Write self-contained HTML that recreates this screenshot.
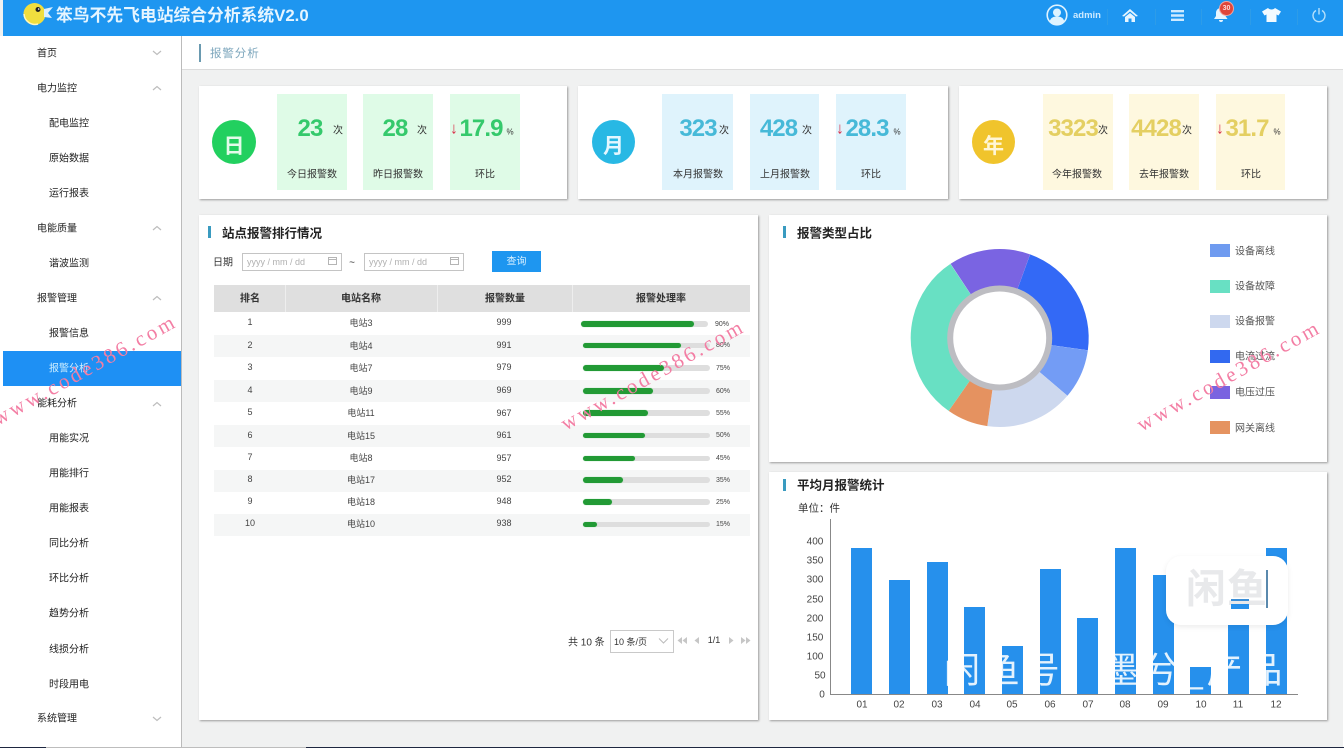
<!DOCTYPE html>
<html lang="zh">
<head>
<meta charset="utf-8">
<title>报警分析</title>
<style>
html,body{margin:0;padding:0;width:1344px;height:748px;overflow:hidden;background:#f0f1f1;}
body{position:relative;font-family:"Liberation Sans","Noto Sans CJK SC",sans-serif;color:#333;font-size:10px;}
#w{position:absolute;left:0;top:0;width:1344px;height:748px;overflow:hidden;filter:blur(.35px);}
.a{position:absolute;}
.c{position:absolute;transform:translate(-50%,calc(-50% + 1.5px));white-space:nowrap;line-height:1;}
.l{position:absolute;transform:translateY(calc(-50% + 1.5px));white-space:nowrap;line-height:1;}
.card{position:absolute;background:#fff;box-shadow:1px 1px 2px #9a9a9a;}
.nav{position:absolute;color:#222;font-size:10px;line-height:1;transform:translateY(calc(-50% + 1.5px));white-space:nowrap;}
.top{left:37px}.sub{left:49px}
.tile{position:absolute;top:94px;height:96px;}
.c.n{font-weight:bold;font-size:24px;letter-spacing:-.9px;transform:translate(-50%,-50%);}
.g{color:#35c96c}.b{color:#46b9d8}.y{color:#e4cf62}
.ar{color:#d9304a;font-size:16px;font-weight:bold}
.h{font-weight:bold;font-size:12.5px;color:#222;}
.mk{position:absolute;width:3px;height:12px;background:#3a9bc0;}
.track{position:absolute;height:5.5px;background:#dedede;border-radius:3px;width:127px;left:583px;}
.fill{position:absolute;height:5.5px;background:#229a35;border-radius:3px;left:0;top:0;box-shadow:0 0 1px #8fd79b;}
.th{font-weight:bold;font-size:10px;color:#333}
.td{font-size:9px;color:#444}
.pc{font-size:7px;color:#444}
.stripe{position:absolute;left:214px;width:536px;height:22.4px;background:#f5f6f6;}
.leg{position:absolute;left:1210px;width:20px;height:12.5px;}
.yl{font-size:10px;color:#444}
.bar{position:absolute;width:21px;background:#2690ec;}
.sep{position:absolute;top:9px;width:1px;height:16px;background:#2d9ce8;}
.wm{position:absolute;font-family:"Liberation Serif",serif;font-size:21px;letter-spacing:3px;color:#f37ea4;line-height:1;white-space:nowrap;transform:translate(-50%,-50%) rotate(-29deg);}
</style>
</head>
<body>
<div id="w">
<!-- header -->
<div class="a" style="left:3px;top:0;width:1340px;height:36px;background:#1e96f0;"></div>
<svg class="a" style="left:18px;top:0" width="40" height="30" viewBox="0 0 40 30">
<circle cx="16.500" cy="14" r="11" fill="#f0de3e"/><path d="M6 14a11 11 0 0 0 14 10" fill="none" stroke="#fff6c0" stroke-width="1.500"/>
<path d="M26 9 L35 7 L30 13 L34 18 L26 17 Z" fill="#d9efff"/>
<circle cx="20" cy="9.500" r="2.500" fill="#222"/><circle cx="20.700" cy="9" r=".8" fill="#fff"/>
</svg>
<div class="l" style="left:56px;top:15px;font-size:16.800px;font-weight:bold;color:#e6f5ff;">笨鸟不先飞电站综合分析系统V2.0</div>
<svg class="a" style="left:1046px;top:4px" width="22" height="22" viewBox="0 0 22 22">
<circle cx="11" cy="11" r="9.800" fill="#1e96f0" stroke="#dff3ff" stroke-width="1.600"/>
<circle cx="11" cy="8.500" r="4" fill="#dff3ff"/><path d="M3.500 18c1-4.500 4-5.500 7.500-5.500s6.500 1 7.500 5.500a10 10 0 0 1-15 0z" fill="#dff3ff"/>
</svg>
<div class="l" style="left:1073px;top:14px;font-size:9.500px;font-weight:bold;color:#cdeaff;">admin</div>
<div class="sep" style="left:1107px"></div><div class="sep" style="left:1155px"></div><div class="sep" style="left:1201px"></div><div class="sep" style="left:1250px"></div><div class="sep" style="left:1297px"></div>
<svg class="a" style="left:1122px;top:8px" width="16" height="15" viewBox="0 0 16 15"><path d="M8 1 L16 8 L14 8.500 L8 3.500 L2 8.500 L0 8 Z" fill="#e6f5ff"/><path d="M3 9 L8 5 L13 9 V14 H9.500 V10.500 H6.500 V14 H3 Z" fill="#e6f5ff"/></svg>
<svg class="a" style="left:1171px;top:10px" width="13" height="11" viewBox="0 0 13 11"><path d="M0 0h13v2.400H0zM0 4.300h13v2.400H0zM0 8.600h13V11H0z" fill="#cfeaff"/></svg>
<svg class="a" style="left:1213px;top:5px" width="22" height="18" viewBox="0 0 22 18"><path d="M8 3c3 0 4.500 2 4.500 5v3l2 3H1l2-3V8c0-3 2-5 5-5z" fill="#e6f5ff"/><path d="M6 15h4a2 2 0 0 1-4 0z" fill="#e6f5ff"/></svg>
<div class="a" style="left:1220px;top:2px;width:13px;height:13px;border-radius:50%;background:#e0453a;box-shadow:0 0 0 1px #f2a6a0;"></div>
<div class="c" style="left:1226.500px;top:7px;font-size:7px;font-weight:bold;color:#ffd9d5;">30</div>
<svg class="a" style="left:1262px;top:8px" width="19" height="14" viewBox="0 0 19 14"><path d="M6 0 C7.500 2 11.500 2 13 0 L19 3.500 L16.500 7.500 L14.500 6.500 V14 H4.500 V6.500 L2.500 7.500 L0 3.500 Z" fill="#f3faff"/></svg>
<svg class="a" style="left:1312px;top:7px" width="14" height="16" viewBox="0 0 14 16"><path d="M4 3.500a6 6 0 1 0 6 0" fill="none" stroke="#b5e0fb" stroke-width="1.400"/><path d="M7 1v6.500" stroke="#b5e0fb" stroke-width="1.400"/></svg>

<!-- sidebar -->
<div class="a" style="left:0;top:36px;width:181px;height:712px;background:#fff;border-right:1px solid #bbb;"></div>
<div class="a" style="left:3px;top:351px;width:178px;height:35px;background:#1e90f4;"></div>
<div class="nav top" style="top:53px">首页</div>
<div class="nav top" style="top:88px">电力监控</div>
<div class="nav sub" style="top:123px">配电监控</div>
<div class="nav sub" style="top:158px">原始数据</div>
<div class="nav sub" style="top:193px">运行报表</div>
<div class="nav top" style="top:228px">电能质量</div>
<div class="nav sub" style="top:263px">谐波监测</div>
<div class="nav top" style="top:298px">报警管理</div>
<div class="nav sub" style="top:333px">报警信息</div>
<div class="nav sub" style="top:368px;color:#cdeeff">报警分析</div>
<div class="nav top" style="top:403px">能耗分析</div>
<div class="nav sub" style="top:438px">用能实况</div>
<div class="nav sub" style="top:473px">用能排行</div>
<div class="nav sub" style="top:508px">用能报表</div>
<div class="nav sub" style="top:543px">同比分析</div>
<div class="nav sub" style="top:578px">环比分析</div>
<div class="nav sub" style="top:613px">趋势分析</div>
<div class="nav sub" style="top:649px">线损分析</div>
<div class="nav sub" style="top:684px">时段用电</div>
<div class="nav top" style="top:718px">系统管理</div>
<svg class="a" style="left:150px;top:40px" width="14" height="690" viewBox="0 0 14 690" fill="none" stroke="#bdbdbd" stroke-width="1.200">
<path d="M3 11l4 3.500 4-3.500"/><path d="M3 50l4-3.500 4 3.500"/><path d="M3 190l4-3.500 4 3.500"/><path d="M3 260l4-3.500 4 3.500"/><path d="M3 366l4-3.500 4 3.500"/><path d="M3 677l4 3.500 4-3.500"/>
</svg>

<!-- breadcrumb -->
<div class="a" style="left:182px;top:36px;width:1162px;height:33px;background:#fff;border-bottom:1px solid #dcdcdc;"></div>
<div class="a" style="left:199px;top:44px;width:2px;height:18px;background:#6a9ab0;"></div>
<div class="l" style="left:210px;top:53px;font-size:11.500px;letter-spacing:.9px;color:#7ea7bd;">报警分析</div>

<!-- stat cards -->
<div class="card" style="left:199px;top:86px;width:368px;height:113px;"></div>
<div class="card" style="left:578px;top:86px;width:370px;height:113px;"></div>
<div class="card" style="left:959px;top:86px;width:368px;height:113px;"></div>

<div class="tile" style="left:277px;width:70px;background:#dffbe7"></div>
<div class="tile" style="left:363px;width:70px;background:#dffbe7"></div>
<div class="tile" style="left:450px;width:70px;background:#dffbe7"></div>
<div class="tile" style="left:662px;width:71px;background:#dff3fc"></div>
<div class="tile" style="left:750px;width:69px;background:#dff3fc"></div>
<div class="tile" style="left:836px;width:70px;background:#dff3fc"></div>
<div class="tile" style="left:1043px;width:70px;background:#fef8df"></div>
<div class="tile" style="left:1129px;width:70px;background:#fef8df"></div>
<div class="tile" style="left:1216px;width:69px;background:#fef8df"></div>

<div class="a" style="left:212px;top:120px;width:44px;height:44px;border-radius:50%;background:#22d05f;"></div>
<div class="c" style="left:234px;top:145px;font-size:21px;font-weight:bold;color:#e4fbea;">日</div>
<div class="a" style="left:592px;top:120px;width:43px;height:44px;border-radius:50%;background:#28b8e4;"></div>
<div class="c" style="left:613.500px;top:145px;font-size:21px;font-weight:bold;color:#e4f7ff;">月</div>
<div class="a" style="left:972px;top:120px;width:43px;height:44px;border-radius:50%;background:#f0c42c;"></div>
<div class="c" style="left:993.500px;top:145px;font-size:21px;font-weight:bold;color:#fff6d6;">年</div>

<div class="c n g" style="left:310px;top:129px">23</div><div class="c" style="left:338px;top:130px">次</div>
<div class="c n g" style="left:395px;top:129px">28</div><div class="c" style="left:422px;top:130px">次</div>
<div class="c ar" style="left:454px;top:128px">↓</div><div class="c n g" style="left:481px;top:129px">17.9</div><div class="c" style="left:510px;top:131px;font-size:8px">%</div>
<div class="c" style="left:312px;top:174px">今日报警数</div><div class="c" style="left:398px;top:174px">昨日报警数</div><div class="c" style="left:485px;top:174px">环比</div>

<div class="c n b" style="left:698px;top:129px">323</div><div class="c" style="left:724px;top:130px">次</div>
<div class="c n b" style="left:778.500px;top:129px">428</div><div class="c" style="left:807px;top:130px">次</div>
<div class="c ar" style="left:840px;top:128px">↓</div><div class="c n b" style="left:867px;top:129px">28.3</div><div class="c" style="left:897px;top:131px;font-size:8px">%</div>
<div class="c" style="left:698px;top:174px">本月报警数</div><div class="c" style="left:785px;top:174px">上月报警数</div><div class="c" style="left:871px;top:174px">环比</div>

<div class="c n y" style="left:1073px;top:129px">3323</div><div class="c" style="left:1103px;top:130px">次</div>
<div class="c n y" style="left:1156px;top:129px">4428</div><div class="c" style="left:1187px;top:130px">次</div>
<div class="c ar" style="left:1220px;top:128px">↓</div><div class="c n y" style="left:1247px;top:129px">31.7</div><div class="c" style="left:1277px;top:131px;font-size:8px">%</div>
<div class="c" style="left:1077px;top:174px">今年报警数</div><div class="c" style="left:1164px;top:174px">去年报警数</div><div class="c" style="left:1251px;top:174px">环比</div>

<!-- panels -->
<div class="card" style="left:199px;top:215px;width:559px;height:505px;"></div>
<div class="card" style="left:769px;top:215px;width:558px;height:247px;"></div>
<div class="card" style="left:769px;top:472px;width:558px;height:248px;"></div>
<div class="mk" style="left:208px;top:226px"></div><div class="l h" style="left:222px;top:232px">站点报警排行情况</div>
<div class="mk" style="left:783px;top:226px"></div><div class="l h" style="left:797px;top:232px">报警类型占比</div>
<div class="mk" style="left:783px;top:479px"></div><div class="l h" style="left:797px;top:484px">平均月报警统计</div>

<!-- filter -->
<div class="l" style="left:213px;top:262px;font-size:10px">日期</div>
<div class="a" style="left:242px;top:253px;width:98px;height:16px;border:1px solid #c4c4c4;"></div>
<div class="l" style="left:247px;top:260.500px;font-size:9px;color:#b0b0b0">yyyy / mm / dd</div>
<svg class="a" style="left:327px;top:255px" width="11" height="11" viewBox="0 0 11 11" fill="none" stroke="#b5b5b5"><rect x="1.500" y="2.500" width="8" height="7"/><path d="M1.500 4.500h8"/></svg>
<div class="c" style="left:352px;top:262px;font-size:10px">~</div>
<div class="a" style="left:364px;top:253px;width:98px;height:16px;border:1px solid #c4c4c4;"></div>
<div class="l" style="left:369px;top:260.500px;font-size:9px;color:#b0b0b0">yyyy / mm / dd</div>
<svg class="a" style="left:449px;top:255px" width="11" height="11" viewBox="0 0 11 11" fill="none" stroke="#b5b5b5"><rect x="1.500" y="2.500" width="8" height="7"/><path d="M1.500 4.500h8"/></svg>
<div class="a" style="left:492px;top:251px;width:49px;height:21px;background:#1e96f0;"></div>
<div class="c" style="left:516.500px;top:261px;font-size:10px;color:#d5efff">查询</div>

<!-- table -->
<div class="a" style="left:214px;top:285px;width:536px;height:27px;background:#dfdfdf;"></div>
<div class="a" style="left:285px;top:285px;width:1px;height:27px;background:#eee;"></div>
<div class="a" style="left:437px;top:285px;width:1px;height:27px;background:#eee;"></div>
<div class="a" style="left:572px;top:285px;width:1px;height:27px;background:#eee;"></div>
<div class="c th" style="left:250px;top:298px">排名</div><div class="c th" style="left:361px;top:298px">电站名称</div><div class="c th" style="left:505px;top:298px">报警数量</div><div class="c th" style="left:661px;top:298px">报警处理率</div>
<div class="stripe" style="top:334.500px"></div><div class="stripe" style="top:379.500px"></div><div class="stripe" style="top:424.500px"></div><div class="stripe" style="top:469.500px"></div><div class="stripe" style="top:514px"></div>

<div class="c td" style="left:250px;top:321px">1</div><div class="c td" style="left:361px;top:322px">电站3</div><div class="c td" style="left:504px;top:321px">999</div>
<div class="track" style="top:321px;left:581px"><div class="fill" style="width:113px"></div></div><div class="l pc" style="left:715px;top:323px">90%</div>
<div class="c td" style="left:250px;top:344px">2</div><div class="c td" style="left:361px;top:345px">电站4</div><div class="c td" style="left:504px;top:344px">991</div>
<div class="track" style="top:342.500px"><div class="fill" style="width:98px"></div></div><div class="l pc" style="left:716px;top:344px">80%</div>
<div class="c td" style="left:250px;top:366px">3</div><div class="c td" style="left:361px;top:367px">电站7</div><div class="c td" style="left:504px;top:366px">979</div>
<div class="track" style="top:365px"><div class="fill" style="width:81px"></div></div><div class="l pc" style="left:716px;top:366.500px">75%</div>
<div class="c td" style="left:250px;top:389px">4</div><div class="c td" style="left:361px;top:390px">电站9</div><div class="c td" style="left:504px;top:389px">969</div>
<div class="track" style="top:388px"><div class="fill" style="width:70px"></div></div><div class="l pc" style="left:716px;top:390px">60%</div>
<div class="c td" style="left:250px;top:411px">5</div><div class="c td" style="left:361px;top:412px">电站11</div><div class="c td" style="left:504px;top:412px">967</div>
<div class="track" style="top:410px"><div class="fill" style="width:65px"></div></div><div class="l pc" style="left:716px;top:412px">55%</div>
<div class="c td" style="left:250px;top:434px">6</div><div class="c td" style="left:361px;top:435px">电站15</div><div class="c td" style="left:504px;top:434px">961</div>
<div class="track" style="top:432.500px"><div class="fill" style="width:62px"></div></div><div class="l pc" style="left:716px;top:434px">50%</div>
<div class="c td" style="left:250px;top:456px">7</div><div class="c td" style="left:361px;top:457px">电站8</div><div class="c td" style="left:504px;top:457px">957</div>
<div class="track" style="top:455.500px"><div class="fill" style="width:52px"></div></div><div class="l pc" style="left:716px;top:457px">45%</div>
<div class="c td" style="left:250px;top:478px">8</div><div class="c td" style="left:361px;top:479px">电站17</div><div class="c td" style="left:504px;top:478px">952</div>
<div class="track" style="top:477px"><div class="fill" style="width:40px"></div></div><div class="l pc" style="left:716px;top:479px">35%</div>
<div class="c td" style="left:250px;top:500px">9</div><div class="c td" style="left:361px;top:501px">电站18</div><div class="c td" style="left:504px;top:500px">948</div>
<div class="track" style="top:499px"><div class="fill" style="width:29px"></div></div><div class="l pc" style="left:716px;top:501px">25%</div>
<div class="c td" style="left:250px;top:522px">10</div><div class="c td" style="left:361px;top:523px">电站10</div><div class="c td" style="left:504px;top:522px">938</div>
<div class="track" style="top:521.500px"><div class="fill" style="width:14px"></div></div><div class="l pc" style="left:716px;top:523px">15%</div>

<!-- pagination -->
<div class="l" style="left:568px;top:642px;font-size:10px">共 10 条</div>
<div class="a" style="left:610px;top:630px;width:62px;height:21px;border:1px solid #c9c9c9;"></div>
<div class="l" style="left:614px;top:641px;font-size:9px">10 条/页</div>
<svg class="a" style="left:658px;top:637px" width="11" height="8" viewBox="0 0 11 8" fill="none" stroke="#bbb"><path d="M1 1.500l4.500 4.500L10 1.500"/></svg>
<svg class="a" style="left:676px;top:636px" width="76" height="10" viewBox="0 0 76 10" fill="#c6c6c6">
<path d="M6 1v7L1.500 4.500zM11 1v7L6.500 4.500zM23 1v7L18.500 4.500zM53 1v7l4.500-3.500zM65 1v7l4.500-3.500zM70 1v7l4.500-3.500z"/></svg>
<div class="c" style="left:714px;top:639px;font-size:9px">1/1</div>

<!-- donut -->
<svg class="a" style="left:900px;top:238px" width="200" height="200" viewBox="0 0 200 200" fill="none">
<g transform="translate(99.700,100)" stroke-width="37">
<circle r="70.500" stroke="#3369f6" pathLength="360" stroke-dasharray="78 360" transform="rotate(-70)"/>
<circle r="70.500" stroke="#739cf5" pathLength="360" stroke-dasharray="32.500 360" transform="rotate(8)"/>
<circle r="70.500" stroke="#cdd8ee" pathLength="360" stroke-dasharray="57.500 360" transform="rotate(40.500)"/>
<circle r="70.500" stroke="#e59260" pathLength="360" stroke-dasharray="27 360" transform="rotate(98)"/>
<circle r="70.500" stroke="#68e0c3" pathLength="360" stroke-dasharray="111.500 360" transform="rotate(125)"/>
<circle r="70.500" stroke="#7a64e2" pathLength="360" stroke-dasharray="53.500 360" transform="rotate(236.500)"/>
<circle r="49.500" stroke="#bdbdc2" stroke-width="6" fill="#fff"/>
</g>
</svg>
<div class="leg" style="top:244px;background:#6f9bf0"></div><div class="l" style="left:1235px;top:251px;color:#555">设备离线</div>
<div class="leg" style="top:280px;background:#68e0c3"></div><div class="l" style="left:1235px;top:286px;color:#555">设备故障</div>
<div class="leg" style="top:315px;background:#cdd8ee"></div><div class="l" style="left:1235px;top:321px;color:#555">设备报警</div>
<div class="leg" style="top:350px;background:#3269f0"></div><div class="l" style="left:1235px;top:356px;color:#555">电流过流</div>
<div class="leg" style="top:386px;background:#7a63e0"></div><div class="l" style="left:1235px;top:392px;color:#555">电压过压</div>
<div class="leg" style="top:421px;background:#e59360"></div><div class="l" style="left:1235px;top:428px;color:#555">网关离线</div>

<!-- bar chart -->
<div class="l" style="left:798px;top:507px;font-size:10.500px">单位：件</div>
<div class="a" style="left:830px;top:519px;width:1px;height:176px;background:#888;"></div>
<div class="a" style="left:830px;top:694px;width:468px;height:1px;background:#888;"></div>
<div class="bar" style="left:851px;top:548px;height:146px"></div>
<div class="bar" style="left:889px;top:580px;height:114px"></div>
<div class="bar" style="left:927px;top:562px;height:132px"></div>
<div class="bar" style="left:964px;top:607px;height:87px"></div>
<div class="bar" style="left:1002px;top:646px;height:48px"></div>
<div class="bar" style="left:1040px;top:569px;height:125px"></div>
<div class="bar" style="left:1077px;top:618px;height:76px"></div>
<div class="bar" style="left:1115px;top:548px;height:146px"></div>
<div class="bar" style="left:1153px;top:575px;height:119px"></div>
<div class="bar" style="left:1190px;top:667px;height:27px"></div>
<div class="bar" style="left:1228px;top:597px;height:97px"></div>
<div class="bar" style="left:1266px;top:548px;height:146px"></div>
<div class="c yl" style="left:815px;top:541px">400</div>
<div class="c yl" style="left:815px;top:560px">350</div>
<div class="c yl" style="left:815px;top:579px">300</div>
<div class="c yl" style="left:815px;top:598.500px">250</div>
<div class="c yl" style="left:815px;top:617.500px">200</div>
<div class="c yl" style="left:815px;top:636.500px">150</div>
<div class="c yl" style="left:815px;top:655.500px">100</div>
<div class="c yl" style="left:820px;top:675px">50</div>
<div class="c yl" style="left:822px;top:693.500px">0</div>
<div class="c yl" style="left:862px;top:703.500px">01</div><div class="c yl" style="left:899px;top:703.500px">02</div><div class="c yl" style="left:937px;top:703.500px">03</div><div class="c yl" style="left:975px;top:703.500px">04</div><div class="c yl" style="left:1012px;top:703.500px">05</div><div class="c yl" style="left:1050px;top:703.500px">06</div><div class="c yl" style="left:1088px;top:703.500px">07</div><div class="c yl" style="left:1125px;top:703.500px">08</div><div class="c yl" style="left:1163px;top:703.500px">09</div><div class="c yl" style="left:1201px;top:703.500px">10</div><div class="c yl" style="left:1238px;top:703.500px">11</div><div class="c yl" style="left:1276px;top:703.500px">12</div>

<!-- overlay logo -->
<div class="a" style="left:1166px;top:556px;width:122px;height:69px;border-radius:15px;background:#fff;box-shadow:0 2px 6px rgba(0,0,0,.08);"></div>
<div class="c" style="left:1227px;top:588px;font-size:40px;font-weight:bold;letter-spacing:1px;color:#e8e9eb;">闲鱼</div>
<div class="a" style="left:1231px;top:599px;width:18px;height:2px;background:#3c8ed6;"></div>
<div class="a" style="left:1231px;top:604px;width:18px;height:5px;background:#2690ec;"></div>
<div class="a" style="left:1266px;top:570px;width:2px;height:38px;background:#5a89ad;"></div>
<div class="l" style="left:944px;top:669px;font-size:36px;letter-spacing:3.800px;color:rgba(255,255,255,.88);">闲鱼号：墨兮_产品</div>

<!-- site watermarks -->
<div class="wm" style="left:85px;top:370px;">www.code386.com</div>
<div class="wm" style="left:653px;top:375px;">www.code386.com</div>
<div class="wm" style="left:1229px;top:376px;">www.code386.com</div>

<!-- page edges -->
<div class="a" style="left:1343px;top:0;width:1px;height:748px;background:#fff;"></div>
<div class="a" style="left:0;top:747px;width:1344px;height:1px;background:#1e2740;"></div>
<div class="a" style="left:46px;top:747px;width:260px;height:1px;background:#bdbdbd;"></div>
</div>
</body>
</html>
